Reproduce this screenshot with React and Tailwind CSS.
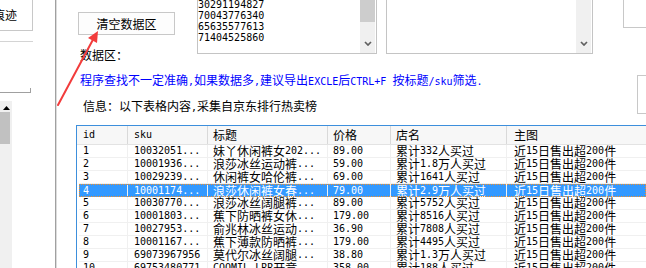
import React from "react";

const MONO = "font-['DejaVu_Sans_Mono',monospace] text-[10px]";

function T({ s }) {
  const parts = s.match(/[\x20-\x7e]+|[^\x20-\x7e]+/g) || [];
  return parts.map((p, i) =>
    /[\x20-\x7e]/.test(p[0]) ? (
      <span key={i} className={MONO}>
        {p}
      </span>
    ) : (
      <span key={i}>{p}</span>
    )
  );
}

const rows = [
  ["1", "10032051...", "妹丫休闲裤女202...", "89.00", "累计332人买过"],
  ["2", "10001936...", "浪莎冰丝运动裤...", "59.00", "累计1.8万人买过"],
  ["3", "10029239...", "休闲裤女哈伦裤...", "69.00", "累计1641人买过"],
  ["4", "10001174...", "浪莎休闲裤女春...", "79.00", "累计2.9万人买过"],
  ["5", "10030770...", "浪莎冰丝阔腿裤...", "89.00", "累计5752人买过"],
  ["6", "10001803...", "蕉下防晒裤女休...", "179.00", "累计8516人买过"],
  ["7", "10027953...", "俞兆林冰丝运动...", "36.90", "累计7808人买过"],
  ["8", "10001167...", "蕉下薄款防晒裤...", "179.00", "累计4495人买过"],
  ["9", "69073967956", "莫代尔冰丝阔腿...", "38.80", "累计1.3万人买过"],
  ["10", "69753480771", "COOMIL LRR开竞...", "358.00", "累计188人买过"],
];

function Chevron() {
  return (
    <svg width="8" height="5" viewBox="0 0 8 5" className="mb-[7px]">
      <polyline points="1,1 4,4 7,1" fill="none" stroke="#606060" strokeWidth="1.7" />
    </svg>
  );
}

export default function App() {
  return (
    <div className="relative w-[646px] h-[268px] overflow-hidden bg-white flex font-['Noto_Sans_CJK_SC',sans-serif] text-[12px] text-black">
      {/* left panel */}
      <div className="w-[55px] shrink-0 flex flex-col">
        <div className="w-[33px] h-[31px] border-r border-b border-[#c8c8c8] flex items-center justify-end pr-[15px] overflow-hidden">
          <span className="whitespace-nowrap leading-[12px]">痕迹</span>
        </div>
        <div className="mt-[10px] w-[33px] h-px bg-[#d4d4d4]" />
        <div className="mt-[46px] w-[31px] h-[5px] border-r border-b border-[#a0a0a0]" />
        <div className="mt-[8px] w-[12px] flex-1 bg-[#f0f0f0] flex flex-col">
          <div className="h-[11px] pt-[5px] flex justify-center">
            <svg width="7" height="4" viewBox="0 0 7 4">
              <polygon points="0,4 3.5,0 7,4" fill="#000" />
            </svg>
          </div>
          <div className="w-[10px] h-[32px] bg-[#c1c1c1]" />
        </div>
      </div>
      <div className="w-px shrink-0 bg-[#a0a0a0]" />
      <div className="w-px shrink-0 bg-[#dcdcdc]" />

      {/* main */}
      <div className="flex-1 flex flex-col min-w-0">
        <div className="flex items-start">
          <div className="w-[140px] shrink-0 flex flex-col">
            <div className="ml-[21px] mt-[12px] w-[97px] h-[23px] border border-[#c8c8c8] bg-[#fdfdfd] flex items-center justify-center leading-[12px]">
              清空数据区
            </div>
            <div className="ml-[23px] mt-[14px] leading-[12px]">数据区：</div>
          </div>
          <div className="w-[180px] h-[54px] shrink-0 border-x border-b border-[#c4c4c4] flex">
            <div className={`flex-1 flex flex-col justify-end pb-[10px] leading-[11px] ${MONO}`}>
              <div>30291194827</div>
              <div>70043776340</div>
              <div>65635577613</div>
              <div>71404525860</div>
            </div>
            <div className="w-[15px] mr-px bg-[#f0f0f0] flex flex-col justify-between items-center">
              <div className="w-full h-[22px] bg-[#cdcdcd]" />
              <Chevron />
            </div>
          </div>
          <div className="ml-[9px] w-[207px] h-[54px] shrink-0 border-x border-b border-[#c4c4c4] flex">
            <div className="flex-1" />
            <div className="w-[15px] mr-px bg-[#f0f0f0] flex flex-col justify-end items-center">
              <Chevron />
            </div>
          </div>
          <div className="ml-[30px] flex-1 h-[28px] border-l border-b border-[#c8c8c8]" />
        </div>

        <div className="flex">
          <div className="flex-1 flex flex-col">
            <div className="ml-[23px] mt-[13px] leading-[12px] text-[#0000ff] whitespace-nowrap">
              <T s="程序查找不一定准确,如果数据多,建议导出EXCLE后CTRL+F 按标题/sku筛选." />
            </div>
            <div className="ml-[26px] mt-[12px] leading-[12px] whitespace-nowrap">
              <T s="信息：以下表格内容,采集自京东排行热卖榜" />
            </div>
          </div>
          <div className="w-[9px] mt-[14px] h-[39px] border-l border-y border-[#c8c8c8]" />
        </div>

        {/* table */}
        <div className="ml-[19px] mt-[11px] flex-1 border-l border-t border-[#3d8fdc] flex flex-col min-w-0">
          <div className="h-[19px] shrink-0 flex bg-[#f7f7f7] border-b border-[#e3e3e3] leading-[12px] whitespace-nowrap">
            <div className="w-[51px] shrink-0 pl-[6px] border-r border-[#d9d9d9] flex items-center"><T s="id" /></div>
            <div className="w-[80px] shrink-0 pl-[6px] border-r border-[#d9d9d9] flex items-center"><T s="sku" /></div>
            <div className="w-[120px] shrink-0 pl-[5px] border-r border-[#d9d9d9] flex items-center">标题</div>
            <div className="w-[63px] shrink-0 pl-[5px] border-r border-[#d9d9d9] flex items-center">价格</div>
            <div className="w-[116px] shrink-0 pl-[5px] border-r border-[#d9d9d9] flex items-center">店名</div>
            <div className="flex-1 pl-[7px] flex items-center">主图</div>
          </div>
          <div className="pl-[2px] flex flex-col">
            {rows.map((r) => {
              const sel = r[0] === "4";
              return (
                <div
                  key={r[0]}
                  className={
                    "h-[13px] shrink-0 flex leading-[12px] whitespace-nowrap " +
                    (sel
                      ? "bg-[#3399ff] text-white outline-1 outline-dotted outline-[#f0902c] -outline-offset-1"
                      : "border-b border-[#f0f0f0]")
                  }
                >
                  <div className="w-[49px] shrink-0 pl-[4px] border-r border-[#f0f0f0] flex items-center"><T s={r[0]} /></div>
                  <div className="w-[80px] shrink-0 pl-[6px] border-r border-[#f0f0f0] flex items-center"><T s={r[1]} /></div>
                  <div className="w-[120px] shrink-0 pl-[5px] border-r border-[#f0f0f0] flex items-center"><T s={r[2]} /></div>
                  <div className="w-[63px] shrink-0 pl-[5px] border-r border-[#f0f0f0] flex items-center"><T s={r[3]} /></div>
                  <div className="w-[116px] shrink-0 pl-[5px] border-r border-[#f0f0f0] flex items-center"><T s={r[4]} /></div>
                  <div className="flex-1 pl-[7px] flex items-center"><T s="近15日售出超200件" /></div>
                </div>
              );
            })}
          </div>
        </div>
      </div>

      {/* red arrow annotation */}
      <svg className="absolute left-0 top-0 pointer-events-none" width="646" height="268" viewBox="0 0 646 268">
        <line x1="58" y1="105" x2="92.5" y2="40.5" stroke="#f23c3c" strokeWidth="2" strokeLinecap="round" />
        <polygon points="98,31 88,38 97,43" fill="#f23c3c" />
      </svg>
    </div>
  );
}
